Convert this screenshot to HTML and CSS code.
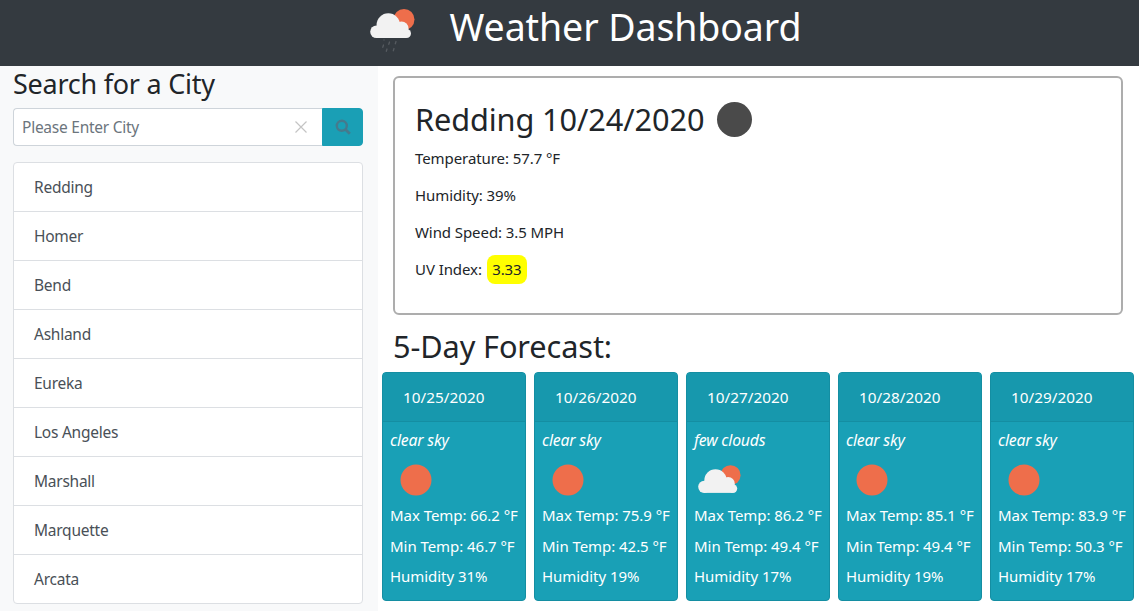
FILE: index.html
```html
<!DOCTYPE html>
<html lang="en">
<head>
<meta charset="utf-8">
<title>Weather Dashboard</title>
<link rel="stylesheet" href="styles.css">
</head>
<body>
<svg width="0" height="0" class="defs">
  <defs>
    <symbol id="sun" viewBox="0 0 32 32"><circle cx="16" cy="16" r="15.500" fill="#ee6e4b"/></symbol>
    <g id="cloud-shape">
      <circle cx="34" cy="10.500" r="10.500" fill="#ee6e4b"/>
      <g fill="#f2f2f2">
        <circle cx="18.300" cy="16" r="11.700"/>
        <circle cx="6.500" cy="22.700" r="6.300"/>
        <circle cx="31.500" cy="19.500" r="7"/>
        <circle cx="36.500" cy="24.500" r="4.500"/>
        <rect x="6" y="20" width="30" height="9"/>
      </g>
    </g>
    <symbol id="cloudsun" viewBox="0 0 46 30"><use href="#cloud-shape"/></symbol>
  </defs>
</svg>
<header class="topbar">
  <svg class="logo" viewBox="0 0 46 44" aria-hidden="true">
    <use href="#cloud-shape"/>
    <g stroke="#565b60" stroke-width="1.300" stroke-linecap="round"><path d="M14 31v0M13.500 36l-.7 2.300M19.500 33l-.7 2.300M26 32.500l-.7 2.300M17 40l-.7 2.300M24 39.500l-.7 2.300"/></g>
  </svg>
  <h1 class="title">Weather Dashboard</h1>
</header>
<div class="layout">
  <aside class="sidebar">
    <h2 class="search-title">Search for a City</h2>
    <form class="search">
      <div class="search-field">
        <span class="placeholder">Please Enter City</span>
        <svg class="clear" viewBox="0 0 12 12" aria-hidden="true"><path d="M.5.500l11 11M11.500.500l-11 11" stroke="#c4c4c4" stroke-width="1.200"/></svg>
      </div>
      <button class="search-btn" type="button" aria-label="Search">
        <svg viewBox="0 0 16 16" aria-hidden="true"><circle cx="6.800" cy="6.800" r="5" fill="none" stroke="#457a8d" stroke-width="2.400"/><path d="M10.500 10.500l4.300 4.300" stroke="#457a8d" stroke-width="2.800"/></svg>
      </button>
    </form>
    <ul class="cities">
      <li>Redding</li><li>Homer</li><li>Bend</li><li>Ashland</li><li>Eureka</li><li>Los Angeles</li><li>Marshall</li><li>Marquette</li><li>Arcata</li>
    </ul>
  </aside>
  <main class="content">
    <section class="today">
      <h2 class="today-title">Redding 10/24/2020 <span class="moon"></span></h2>
      <p>Temperature: 57.7 °F</p>
      <p>Humidity: 39%</p>
      <p>Wind Speed: 3.5 MPH</p>
      <p>UV Index: <span class="uv">3.33</span></p>
    </section>
    <h2 class="forecast-title">5-Day Forecast:</h2>
    <div class="forecast">
      <article class="day">
        <div class="day-head">10/25/2020</div>
        <div class="day-body"><em>clear sky</em><svg class="ico ico-sun"><use href="#sun"/></svg><p>Max Temp: 66.2 °F</p><p>Min Temp: 46.7 °F</p><p>Humidity 31%</p></div>
      </article>
      <article class="day">
        <div class="day-head">10/26/2020</div>
        <div class="day-body"><em>clear sky</em><svg class="ico ico-sun"><use href="#sun"/></svg><p>Max Temp: 75.9 °F</p><p>Min Temp: 42.5 °F</p><p>Humidity 19%</p></div>
      </article>
      <article class="day">
        <div class="day-head">10/27/2020</div>
        <div class="day-body"><em>few clouds</em><svg class="ico ico-cloud"><use href="#cloudsun"/></svg><p>Max Temp: 86.2 °F</p><p>Min Temp: 49.4 °F</p><p>Humidity 17%</p></div>
      </article>
      <article class="day">
        <div class="day-head">10/28/2020</div>
        <div class="day-body"><em>clear sky</em><svg class="ico ico-sun"><use href="#sun"/></svg><p>Max Temp: 85.1 °F</p><p>Min Temp: 49.4 °F</p><p>Humidity 19%</p></div>
      </article>
      <article class="day">
        <div class="day-head">10/29/2020</div>
        <div class="day-body"><em>clear sky</em><svg class="ico ico-sun"><use href="#sun"/></svg><p>Max Temp: 83.9 °F</p><p>Min Temp: 50.3 °F</p><p>Humidity 17%</p></div>
      </article>
    </div>
  </main>
</div>
</body>
</html>
```
FILE: styles.css
```css
* { box-sizing: border-box; }
html, body { margin: 0; height: 100%; overflow: hidden; }
body { font-family: "Noto Sans", "Open Sans", sans-serif; font-size: 15px; color: #212529; background: #fff; }
.defs { position: absolute; }
h1, h2, p, ul { margin: 0; padding: 0; font-weight: 400; }

.topbar { height: 66px; background: #343a40; display: flex; align-items: flex-start; justify-content: center; padding: 4px 0 0 32px; }
.logo { width: 46px; height: 44px; margin: 5px 34px 0 0; }
.title { font-size: 37.500px; line-height: 46px; color: #fff; letter-spacing: -.1px; }

.layout { display: flex; height: 545px; }
.sidebar { width: 378px; flex: none; background: #f8f9fa; padding: 0 15px 0 13px; }
.search-title { font-size: 27px; line-height: 36px; margin-bottom: 6px; letter-spacing: -.25px; }
.search { display: flex; height: 38px; margin-bottom: 16px; }
.search-field { flex: 1; display: flex; align-items: center; justify-content: space-between; background: #fff; border: 1px solid #ced4da; border-right: 0; border-radius: 4px 0 0 4px; padding: 0 15px 0 8px; }
.placeholder { color: #6c757d; font-size: 15.500px; letter-spacing: -.25px; }
.clear { width: 12px; height: 12px; }
.search-btn { width: 41px; padding: 0; background: #1a9fb5; border: 1px solid #1a9fb5; border-radius: 0 4px 4px 0; display: flex; align-items: center; justify-content: center; }
.search-btn svg { width: 16px; height: 16px; }
.cities { list-style: none; background: #fff; border: 1px solid #dcdfe3; border-radius: 4px; }
.cities li { height: 49px; line-height: 48px; padding-left: 20px; color: #495057; font-size: 15.500px; letter-spacing: -.25px; border-bottom: 1px solid #dcdfe3; }
.cities li:last-child { height: 48px; border-bottom: 0; }

.content { flex: 1; min-width: 0; padding: 10px 5px 0 4px; }
.today { margin: 0 11px; height: 239px; border: 2px solid #adadad; border-radius: 6px; padding: 20px 20px 0; }
.today-title { font-size: 30.700px; line-height: 42px; display: flex; align-items: center; gap: 13px; margin-bottom: 7px; letter-spacing: -.1px; }
.moon { width: 35px; height: 35px; border-radius: 50%; background: #4a4a4a; }
.today p { height: 37px; line-height: 23px; font-size: 15px; letter-spacing: -.08px; }
.uv { display: inline-block; background: #ff0; border-radius: 8px; padding: 3px 5.500px; margin-top: -4px; margin-left: 1px; }
.forecast-title { font-size: 30.700px; line-height: 42px; margin: 10px 0 5px 11px; letter-spacing: -.1px; }
.forecast { display: flex; gap: 8px; }
.day { width: 144px; height: 229px; background: #19a0b6; border: 1px solid #148ea2; border-radius: 4px; color: #fff; }
.day-head { height: 49px; line-height: 48px; padding-left: 20px; font-size: 15.300px; background: #1798ad; border-bottom: 1px solid #148ea2; }
.day-body { padding: 7px 6px 0 7px; font-size: 15px; letter-spacing: -.05px; white-space: nowrap; }
.day-body em { display: block; line-height: 23px; font-size: 15.800px; letter-spacing: -.2px; }
.ico { display: block; }
.ico-sun { width: 32px; height: 32px; margin: 12px 0 4px 10px; }
.ico-cloud { width: 44px; height: 29px; margin: 13px 0 6px 4px; }
.day-body p { height: 30.500px; line-height: 30px; }
```
